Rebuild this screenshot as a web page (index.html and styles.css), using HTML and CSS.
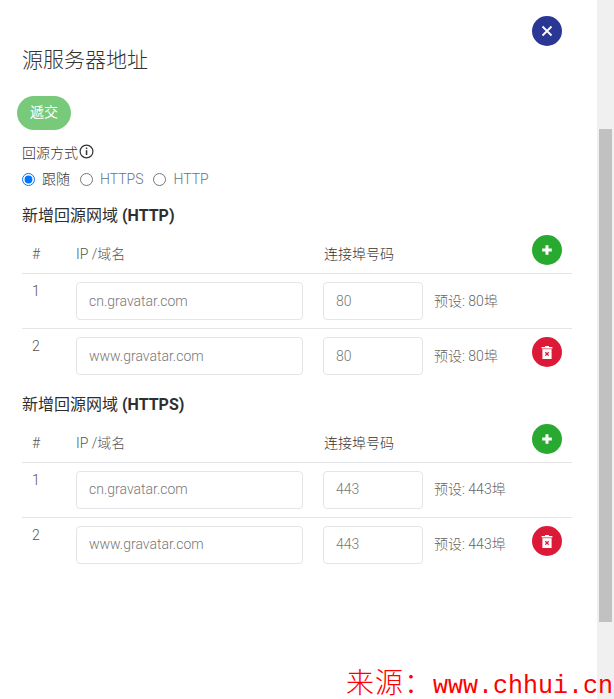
FILE: index.html
```html
<!DOCTYPE html>
<html lang="zh-CN">
  <head>
    <meta charset="UTF-8" />
    <title>源服务器地址</title>
    <link rel="stylesheet" href="styles.css">
  </head>
  <body>
    <div class="page">
      <div class="panel">
        <div class="top-bar">
          <button class="round-btn close-btn">
            <svg width="12" height="12" viewBox="0 0 12 12"><path d="M1.5 1.5l9 9M10.5 1.5l-9 9" stroke="#fff" stroke-width="1.8" fill="none"/></svg>
          </button>
        </div>
        <h2 class="title">源服务器地址</h2>
        <button class="submit-btn">遞交</button>
        <div class="origin-label">回源方式
          <svg class="info-icon" width="15" height="15" viewBox="0 0 15 15"><circle cx="7.5" cy="7.5" r="6.4" fill="none" stroke="#333" stroke-width="1.2"/><rect x="6.8" y="3.6" width="1.5" height="1.5" fill="#333"/><rect x="6.8" y="6.2" width="1.5" height="4.8" fill="#333"/></svg>
        </div>
        <div class="radio-row">
          <label class="radio-item"><input type="radio" name="mode" checked> <span class="dark">跟随</span></label>
          <label class="radio-item"><input type="radio" name="mode"> <span>HTTPS</span></label>
          <label class="radio-item"><input type="radio" name="mode"> <span>HTTP</span></label>
        </div>

        <h3 class="section-title">新增回源网域 <b>(HTTP)</b></h3>
        <div class="grid-head">
          <div class="cell-num">#</div>
          <div>IP /域名</div>
          <div class="head-port">连接埠号码</div>
          <div></div>
          <button class="round-btn add-btn">
            <svg width="12" height="12" viewBox="0 0 12 12"><path d="M6 1.2v9.6M1.2 6h9.6" stroke="#fff" stroke-width="3" fill="none"/></svg>
          </button>
        </div>
        <div class="grid-row">
          <div class="cell-num">1</div>
          <input class="field" placeholder="cn.gravatar.com">
          <input class="field port" value="80">
          <div class="hint">预设: 80埠</div>
          <div></div>
        </div>
        <div class="grid-row last">
          <div class="cell-num">2</div>
          <input class="field" placeholder="www.gravatar.com">
          <input class="field port" value="80">
          <div class="hint">预设: 80埠</div>
          <button class="round-btn del-btn">
            <svg width="12" height="14" viewBox="0 0 12 14"><path d="M4 1h4v1h3.4v1.4H.6V2H4z" fill="#fff"/><path d="M1.4 4.2h9.2V14H1.4z" fill="#fff"/><path d="M4.3 7.2l3.4 3.4M7.7 7.2l-3.4 3.4" stroke="#dc1a38" stroke-width="1.3" fill="none"/></svg>
          </button>
        </div>

        <h3 class="section-title second">新增回源网域 <b>(HTTPS)</b></h3>
        <div class="grid-head">
          <div class="cell-num">#</div>
          <div>IP /域名</div>
          <div class="head-port">连接埠号码</div>
          <div></div>
          <button class="round-btn add-btn">
            <svg width="12" height="12" viewBox="0 0 12 12"><path d="M6 1.2v9.6M1.2 6h9.6" stroke="#fff" stroke-width="3" fill="none"/></svg>
          </button>
        </div>
        <div class="grid-row raised">
          <div class="cell-num">1</div>
          <input class="field" placeholder="cn.gravatar.com">
          <input class="field port" value="443">
          <div class="hint">预设: 443埠</div>
          <div></div>
        </div>
        <div class="grid-row raised last">
          <div class="cell-num">2</div>
          <input class="field" placeholder="www.gravatar.com">
          <input class="field port" value="443">
          <div class="hint">预设: 443埠</div>
          <button class="round-btn del-btn">
            <svg width="12" height="14" viewBox="0 0 12 14"><path d="M4 1h4v1h3.4v1.4H.6V2H4z" fill="#fff"/><path d="M1.4 4.2h9.2V14H1.4z" fill="#fff"/><path d="M4.3 7.2l3.4 3.4M7.7 7.2l-3.4 3.4" stroke="#dc1a38" stroke-width="1.3" fill="none"/></svg>
          </button>
        </div>
      </div>
      <div class="scroll-track"><div class="scroll-thumb"></div></div>
    </div>
    <div class="watermark"><span class="wm-cn">来源：</span>www.chhui.cn</div>
  </body>
</html>
```

FILE: styles.css
```css
html,
body {
  margin: 0;
  height: 699px;
  overflow: hidden;
  background: #fff;
}

body {
  font-family: Roboto, "Noto Sans CJK SC", sans-serif;
  font-weight: 300;
  font-size: 14px;
  color: #333;
}

.page {
  display: flex;
  height: 699px;
}

.panel {
  width: 550px;
  padding: 16px 25px 0 22px;
}

.scroll-track {
  width: 17px;
  background: #f0f0f0;
  padding: 129px 2px 0;
  box-sizing: border-box;
}

.scroll-thumb {
  height: 493px;
  background: #c1c1c1;
}

.top-bar {
  display: flex;
  justify-content: flex-end;
  height: 30px;
  padding-right: 10px;
}

.round-btn {
  width: 30px;
  height: 30px;
  padding: 0;
  border: none;
  border-radius: 50%;
  display: flex;
  align-items: center;
  justify-content: center;
}

.close-btn {
  background: #2b3795;
}

.add-btn {
  background: #28a92f;
  margin-top: 9px;
}

.del-btn {
  background: #dc1a38;
}

.title {
  margin: 0;
  font-size: 21px;
  font-weight: 300;
  line-height: 28px;
  color: #333;
}

.submit-btn {
  display: block;
  margin: 22px 0 0 -5px;
  width: 54px;
  height: 34px;
  padding: 0 0 5px;
  border: none;
  border-radius: 17px;
  background: #78c97a;
  color: #fff;
  font: 400 14px Roboto, "Noto Sans CJK SC", sans-serif;
}

.origin-label {
  margin-top: 13px;
  height: 20px;
  line-height: 20px;
  font-size: 14px;
  display: flex;
  align-items: flex-start;
  gap: 1px;
}

.info-icon {
  margin-top: 1px;
}

.radio-row {
  display: flex;
  gap: 10px;
  margin-top: 6px;
  height: 20px;
  line-height: 20px;
}

.radio-item {
  display: flex;
  align-items: center;
  gap: 7px;
  color: #5f7488;
}

.radio-item .dark {
  color: #333;
}

.radio-item input {
  margin: 0;
  width: 13px;
  height: 13px;
}

.section-title {
  margin: 17px 0 0;
  font-size: 16px;
  font-weight: 400;
  line-height: 20px;
  color: #2f2f2f;
}

.section-title b {
  font-weight: 700;
}

.section-title.second {
  margin-top: 12px;
}

.grid-head,
.grid-row {
  display: grid;
  grid-template-columns: 54px 247px 111px 98px 40px;
  border-bottom: 1px solid #e3e5e8;
}

.grid-head {
  height: 47px;
  align-items: start;
  line-height: 20px;
  color: #555;
}

.grid-head > div {
  padding-top: 18px;
}

.grid-head .head-port {
  color: #333;
  padding-left: 1px;
}

.cell-num {
  padding-left: 10px;
}

.grid-row {
  padding-top: 8px;
  height: 46px;
  align-items: start;
}

.grid-row.last {
  border-bottom: none;
}

.grid-row .cell-num {
  line-height: 18px;
  color: #555;
}

.field {
  box-sizing: border-box;
  width: 227px;
  height: 38px;
  padding: 0 12px;
  border: 1px solid #e3e5e8;
  border-radius: 4px;
  background: #fff;
  font: 300 14px Roboto, "Noto Sans CJK SC", sans-serif;
  color: #777;
}

.field::placeholder {
  color: #777;
  opacity: 1;
}

.field.port {
  width: 100px;
}

.hint {
  line-height: 38px;
  font-size: 14px;
  color: #666;
}

.grid-row.raised .field {
  padding-bottom: 2px;
}

.grid-row.raised .hint {
  line-height: 36px;
}

.watermark {
  position: absolute;
  left: 346px;
  top: 665px;
  font-family: "Liberation Mono", monospace;
  font-weight: 400;
  font-size: 25px;
  line-height: 32px;
  color: #f00;
  white-space: nowrap;
}

.wm-cn {
  font-family: "Noto Sans CJK SC", sans-serif;
  font-weight: 300;
  font-size: 28px;
  letter-spacing: 1px;
}
```
